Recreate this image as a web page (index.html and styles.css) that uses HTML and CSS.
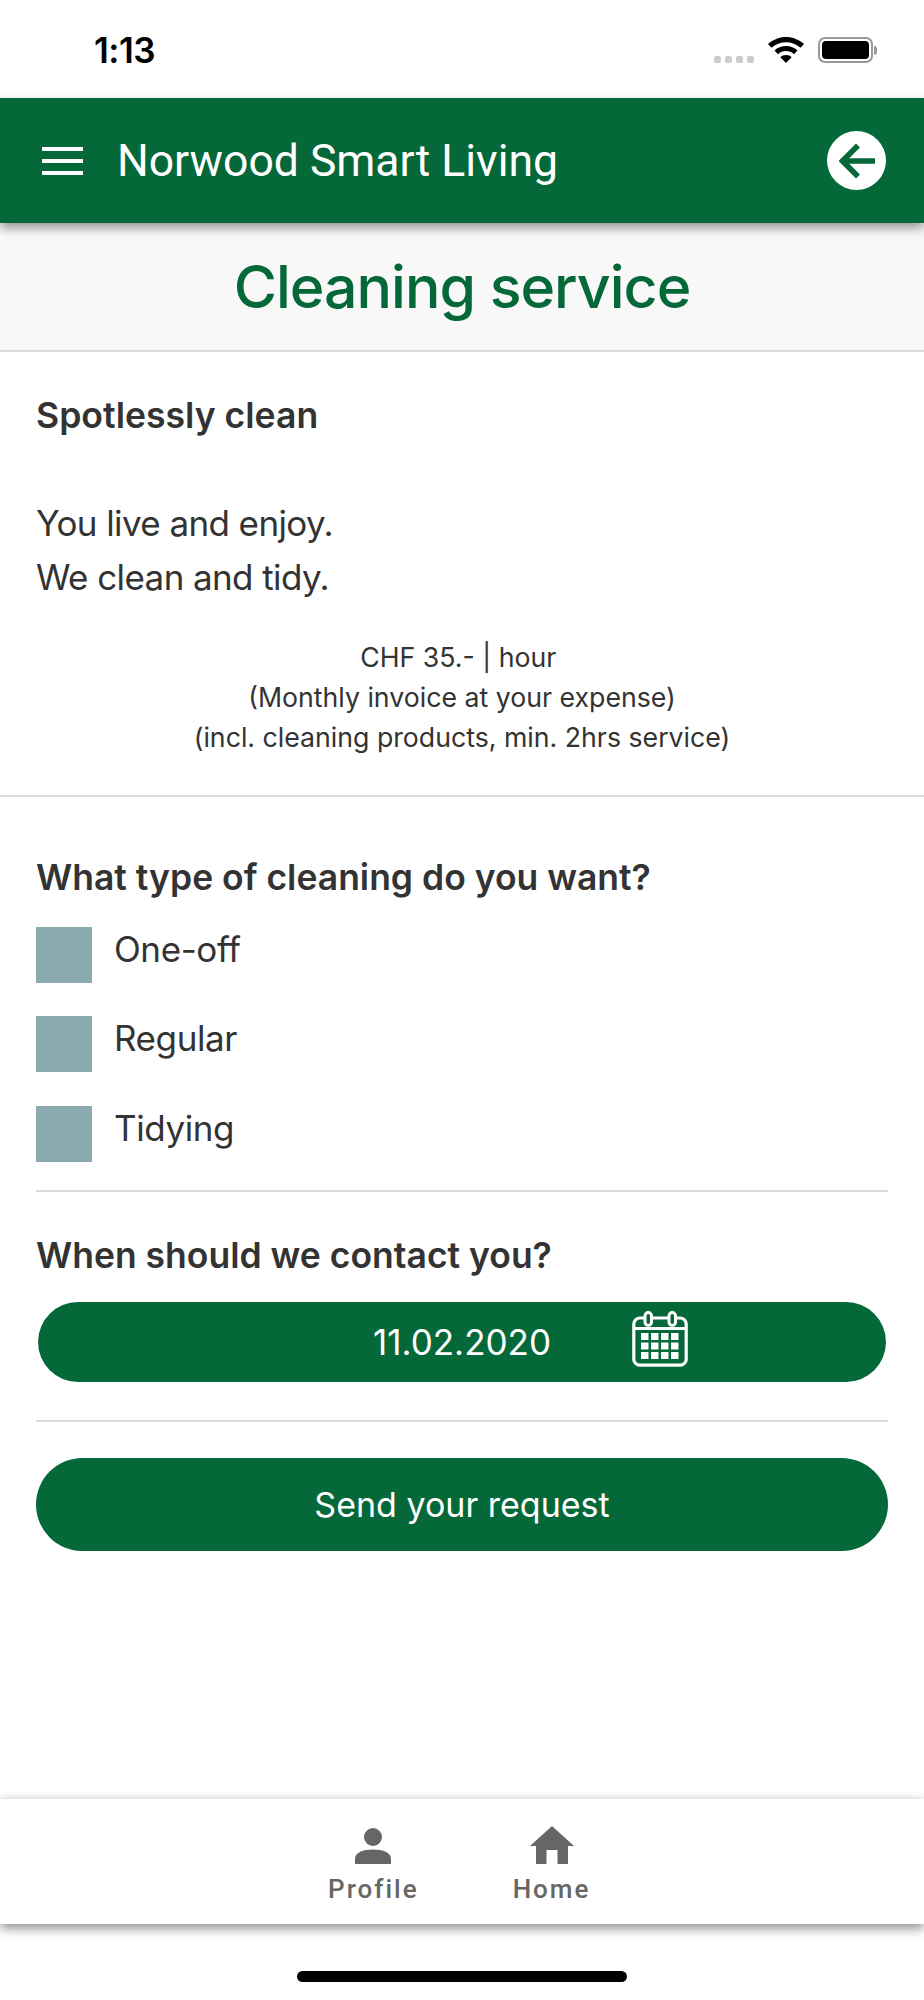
FILE: index.html
```html
<!DOCTYPE html>
<html lang="en">
<head>
<meta charset="utf-8">
<title>Cleaning service</title>
<link rel="stylesheet" href="styles.css">
</head>
<body>
<div class="screen">
  <div class="status">
    <span class="time">1:13</span>
    <div class="status-icons">
      <div class="dots"><i></i><i></i><i></i><i></i></div>
      <svg class="wifi" width="36" height="26" viewBox="0 0 36 26"><path fill="#000" d="M18 0C11 0 5 2.700 0 7l3.500 3.800C7.500 7.300 12.500 5.300 18 5.300s10.500 2 14.500 5.500L36 7C31 2.700 25 0 18 0z"/><path fill="#000" d="M18 9c-4.500 0-8.500 1.700-11.500 4.500l3.500 3.700c2-2 5-3.200 8-3.200s6 1.200 8 3.200l3.500-3.700C26.500 10.700 22.500 9 18 9z"/><path fill="#000" d="M18 18c-2.300 0-4.300.9-5.600 2.300L18 26l5.600-5.700C22.300 18.900 20.300 18 18 18z"/></svg>
      <div class="battery"><div class="battery-body"><div class="battery-fill"></div></div><div class="battery-cap"></div></div>
    </div>
  </div>
  <header class="appbar">
    <div class="burger"><i></i><i></i><i></i></div>
    <span class="app-title">Norwood Smart Living</span>
    <div class="back">
      <svg width="36" height="36" viewBox="0 0 36 36"><path fill="none" stroke="#056839" stroke-width="5.500" d="M36 18H5M19 2.500L3.500 18 19 33.500"/></svg>
    </div>
  </header>
  <div class="title-band"><h1>Cleaning service</h1></div>
  <section class="intro">
    <h2 class="intro-head">Spotlessly clean</h2>
    <p class="intro-text">You live and enjoy.<br>We clean and tidy.</p>
    <p class="price">CHF 35.- | hour&nbsp;<br>(Monthly invoice at your expense)<br>(incl. cleaning products, min. 2hrs service)</p>
  </section>
  <section class="form">
    <h2 class="q-type">What type of cleaning do you want?</h2>
    <div class="options">
      <div class="option"><span class="box"></span><span class="opt-label">One-off</span></div>
      <div class="option"><span class="box"></span><span class="opt-label">Regular</span></div>
      <div class="option"><span class="box"></span><span class="opt-label">Tidying</span></div>
    </div>
    <hr class="rule rule-a">
    <h2 class="q-when">When should we contact you?</h2>
    <div class="date">
      <span class="date-text">11.02.2020</span>
      <svg class="cal" width="56" height="56" viewBox="0 0 56 56">
        <rect x="1.800" y="7" width="52.400" height="47.200" rx="6" fill="none" stroke="#fff" stroke-width="3.200"/>
        <path d="M3 17.500h50" stroke="#fff" stroke-width="3"/>
        <rect x="13" y="1.500" width="6.500" height="13" rx="3.250" fill="#056839" stroke="#fff" stroke-width="3"/>
        <rect x="37" y="1.500" width="6.500" height="13" rx="3.250" fill="#056839" stroke="#fff" stroke-width="3"/>
        <g fill="#fff">
          <rect x="9" y="22" width="7.500" height="7"/><rect x="19" y="22" width="7.500" height="7"/><rect x="29" y="22" width="7.500" height="7"/><rect x="39" y="22" width="7.500" height="7"/>
          <rect x="9" y="31.500" width="7.500" height="7"/><rect x="19" y="31.500" width="7.500" height="7"/><rect x="29" y="31.500" width="7.500" height="7"/><rect x="39" y="31.500" width="7.500" height="7"/>
          <rect x="9" y="41" width="7.500" height="7"/><rect x="19" y="41" width="7.500" height="7"/><rect x="29" y="41" width="7.500" height="7"/><rect x="39" y="41" width="7.500" height="7"/>
        </g>
      </svg>
    </div>
    <hr class="rule rule-b">
    <button class="send">Send your request</button>
  </section>
  <nav class="tabs">
    <div class="tab">
      <svg width="36" height="38" viewBox="0 0 36 38"><ellipse cx="18" cy="11" rx="9" ry="9" fill="#666"/><path fill="#666" d="M0 38v-5c0-6.500 8-9.500 18-9.500s18 3 18 9.500v5z"/></svg>
      <span>Profile</span>
    </div>
    <div class="tab">
      <svg width="44" height="38" viewBox="0 0 44 38"><path fill="#666" d="M22 0L44 20h-6v18H27.500V24h-11v14H6V20H0z"/></svg>
      <span>Home</span>
    </div>
  </nav>
  <div class="homebar"><i></i></div>
</div>
</body>
</html>
```
FILE: styles.css
```css
* { box-sizing: border-box; }
html, body { margin: 0; padding: 0; background: #fff; }
body { font-family: "Inter", "Liberation Sans", sans-serif; color: #333; }
.screen { width: 924px; height: 2000px; display: flex; flex-direction: column; overflow: hidden; background: #fff; }

.status { height: 98px; flex: none; display: flex; justify-content: space-between; padding: 32px 47px 0 94px; }
.time { font-size: 35px; font-weight: 600; color: #000; line-height: 36px; letter-spacing: -0.5px; }
.status-icons { display: flex; height: 26px; margin-top: 5px; }
.dots { display: flex; gap: 4px; align-items: flex-end; margin-right: 14px; }
.dots i { width: 7px; height: 7px; border-radius: 2px; background: #ccc; }
.wifi { margin-right: 14px; }
.battery { display: flex; align-items: center; }
.battery-body { width: 55px; height: 26px; border: 2px solid #999; border-radius: 7px; padding: 2px; }
.battery-fill { width: 100%; height: 100%; background: #000; border-radius: 4px; }
.battery-cap { width: 3px; height: 9px; background: #999; border-radius: 0 3px 3px 0; margin-left: 1px; }

.appbar { height: 125px; flex: none; background: #056839; color: #fff; display: flex; align-items: center; padding: 0 38px 0 42px; box-shadow: 0 5px 10px rgba(0,0,0,.4); position: relative; }
.burger { width: 41px; display: flex; flex-direction: column; gap: 8px; margin-right: 34px; }
.burger i { display: block; height: 4px; background: #fff; }
.app-title { font-family: "Roboto", sans-serif; font-size: 44.5px; flex: 1; }
.back { width: 59px; height: 59px; border-radius: 50%; background: #fff; display: flex; align-items: center; justify-content: center; }

.title-band { height: 129px; flex: none; background: #f8f8f8; border-bottom: 2px solid #dcdcdc; display: flex; align-items: center; justify-content: center; }
h1 { margin: 0; font-size: 59px; font-weight: 500; color: #056839; letter-spacing: -1px; }

.intro { height: 445px; flex: none; border-bottom: 2px solid #dcdcdc; padding: 42px 36px 0; }
.intro-head { margin: 0; font-size: 35.6px; font-weight: 600; line-height: 44px; }
.intro-text { margin: 58px 0 0; font-size: 35px; line-height: 54px; letter-spacing: -0.6px; }
.price { margin: 33px 0 0; text-align: center; font-size: 26.7px; line-height: 40px; }

.form { flex: 1; padding: 59px 36px 0; }
.q-type, .q-when { margin: 0; font-size: 35.5px; font-weight: 600; line-height: 44px; }
.options { margin-top: 27px; display: flex; flex-direction: column; gap: 33.300px; }
.option { display: flex; height: 56px; }
.box { width: 56px; height: 56px; background: #8aaab0; margin-right: 22px; }
.opt-label { font-size: 35px; line-height: 44px; letter-spacing: -0.4px; }
.rule { border: 0; height: 2px; background: #dcdcdc; margin: 0; }
.rule-a { margin-top: 28.400px; }
.q-when { margin-top: 42px; }
.date { height: 80px; margin: 24px 2px 0; border-radius: 40px; background: #056839; color: #fff; display: flex; align-items: center; justify-content: center; position: relative; }
.date-text { font-size: 35px; }
.cal { position: absolute; left: 594px; top: 9px; }
.rule-b { margin-top: 38px; }
.send { display: block; width: 100%; height: 93px; margin-top: 36px; border: 0; border-radius: 47px; background: #056839; color: #fff; font: 34px "Inter", sans-serif; }

.tabs { height: 125px; flex: none; background: #fff; display: flex; justify-content: center; gap: 94px; padding-right: 5.500px; box-shadow: 0 5px 10px rgba(0,0,0,.4), 0 -3px 8px rgba(0,0,0,.06); position: relative; }
.tab { display: flex; flex-direction: column; align-items: center; padding-top: 27px; color: #666; }
.tab span { font-family: "Roboto", sans-serif; font-size: 26px; font-weight: 500; letter-spacing: 2px; line-height: 32px; margin-top: 9px; }

.homebar { height: 76px; flex: none; display: flex; justify-content: center; padding-top: 47px; }
.homebar i { display: block; width: 330px; height: 11px; border-radius: 6px; background: #000; }
```
